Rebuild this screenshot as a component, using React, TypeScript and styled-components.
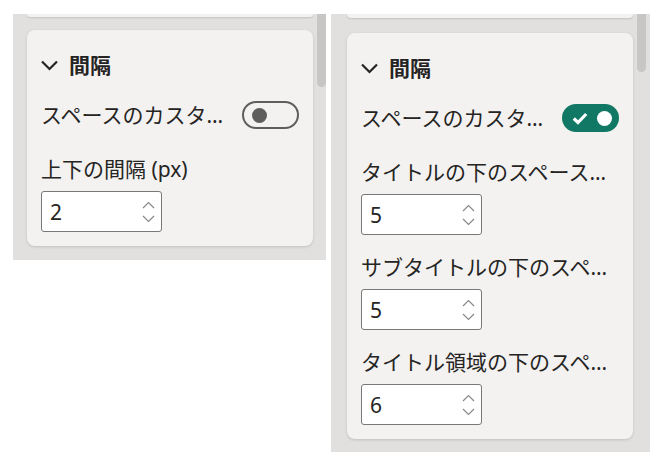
import styled, { createGlobalStyle } from "styled-components";

const GlobalStyle = createGlobalStyle`
  html, body {
    margin: 0;
    padding: 0;
    background: #ffffff;
  }
  body {
    font-family: "Noto Sans", "Noto Sans CJK JP", sans-serif;
    color: #252423;
  }
`;

const Page = styled.div`
  display: flex;
  align-items: flex-start;
  gap: 5px;
  padding: 14px 0 0 13px;
`;

const Panel = styled.div<{ $padLeft: number; $padBottom: number; $tail: number }>`
  display: flex;
  background: #e1e0df;
  padding-right: ${(p) => p.$tail}px;
  & > div:first-child {
    padding-left: ${(p) => p.$padLeft}px;
    padding-bottom: ${(p) => p.$padBottom}px;
  }
`;

const Column = styled.div`
  display: flex;
  flex-direction: column;
  padding-right: 4px;
`;

const Scrollbar = styled.div`
  width: 9px;
  display: flex;
  flex-direction: column;
`;

const Thumb = styled.div<{ $height: number }>`
  height: ${(p) => p.$height}px;
  background: #c8c6c4;
  border-radius: 0 0 5px 5px;
`;

const CardStub = styled.div<{ $height: number; $gap: number }>`
  height: ${(p) => p.$height}px;
  margin-bottom: ${(p) => p.$gap}px;
  background: #f3f2f1;
  border-radius: 0 0 8px 8px;
  box-shadow: 0 1px 2px rgba(0, 0, 0, 0.14);
`;

const Card = styled.div`
  width: 286px;
  box-sizing: border-box;
  background: #f3f2f1;
  border-radius: 8px;
  box-shadow: 0 1px 3px rgba(0, 0, 0, 0.14);
  padding: 20px 14px 14px;
  display: flex;
  flex-direction: column;
`;

const Heading = styled.div`
  display: flex;
  align-items: center;
  gap: 11px;
  height: 30px;
  margin-bottom: 20px;
  font-size: 21px;
  font-weight: 700;
  line-height: 30px;
`;

const ToggleRow = styled.div`
  display: flex;
  align-items: center;
  gap: 16px;
  height: 30px;
  margin-bottom: 25px;
`;

const Label = styled.div`
  flex: 1;
  min-width: 0;
  font-size: 21px;
  line-height: 28px;
  white-space: nowrap;
  overflow: hidden;
  text-overflow: ellipsis;
`;

const Fields = styled.div`
  display: flex;
  flex-direction: column;
  gap: 18px;
`;

const Field = styled.div`
  display: flex;
  flex-direction: column;
  gap: 8px;
`;

const NumberBox = styled.div`
  width: 121px;
  height: 41px;
  box-sizing: border-box;
  border: 1px solid #7a7876;
  border-radius: 3px;
  background: #ffffff;
  display: flex;
  align-items: center;
  padding: 0 6px 0 8px;
  font-size: 21px;
`;

const Value = styled.span`
  flex: 1;
`;

const Spinner = styled.div`
  display: flex;
  flex-direction: column;
  gap: 6px;
`;

const Toggle = styled.div<{ $on: boolean }>`
  flex: none;
  width: 57px;
  height: 28px;
  box-sizing: border-box;
  border-radius: 14px;
  border: 2px solid ${(p) => (p.$on ? "#117865" : "#605e5c")};
  background: ${(p) => (p.$on ? "#117865" : "transparent")};
  display: flex;
  align-items: center;
  justify-content: ${(p) => (p.$on ? "space-between" : "flex-start")};
  padding: 0 5px 0 8px;
`;

const Knob = styled.div<{ $on: boolean }>`
  width: 15px;
  height: 15px;
  border-radius: 50%;
  background: ${(p) => (p.$on ? "#ffffff" : "#605e5c")};
`;

const Chevron = () => (
  <svg width="17" height="11" viewBox="0 0 17 11">
    <path d="M1 1.5 L8.5 9 L16 1.5" fill="none" stroke="#252423" strokeWidth="2.2" />
  </svg>
);

const Arrows = () => (
  <Spinner>
    <svg width="13" height="8" viewBox="0 0 13 8">
      <path d="M1 7 L6.5 1.5 L12 7" fill="none" stroke="#8a8886" strokeWidth="1.2" />
    </svg>
    <svg width="13" height="8" viewBox="0 0 13 8">
      <path d="M1 1 L6.5 6.5 L12 1" fill="none" stroke="#8a8886" strokeWidth="1.2" />
    </svg>
  </Spinner>
);

const Check = () => (
  <svg width="16" height="13" viewBox="0 0 16 13">
    <path d="M1.8 6.5 L6 10.5 L14.2 2" fill="none" stroke="#ffffff" strokeWidth="3.2" />
  </svg>
);

type FieldData = { label: string; value: string };

type SpacingProps = {
  on: boolean;
  fields: FieldData[];
};

const SpacingCard = ({ on, fields }: SpacingProps) => (
  <Card>
    <Heading>
      <Chevron />
      <span>間隔</span>
    </Heading>
    <ToggleRow>
      <Label>スペースのカスタマイズ</Label>
      <Toggle $on={on}>
        {on && <Check />}
        <Knob $on={on} />
      </Toggle>
    </ToggleRow>
    <Fields>
      {fields.map((f) => (
        <Field key={f.label}>
          <Label>{f.label}</Label>
          <NumberBox>
            <Value>{f.value}</Value>
            <Arrows />
          </NumberBox>
        </Field>
      ))}
    </Fields>
  </Card>
);

export default function App() {
  return (
    <>
      <GlobalStyle />
      <Page>
        <Panel $padLeft={14} $padBottom={14} $tail={0}>
          <Column>
            <CardStub $height={3} $gap={13} />
            <SpacingCard on={false} fields={[{ label: "上下の間隔 (px)", value: "2" }]} />
          </Column>
          <Scrollbar>
            <Thumb $height={73} />
          </Scrollbar>
        </Panel>
        <Panel $padLeft={16} $padBottom={13} $tail={4}>
          <Column>
            <CardStub $height={4} $gap={15} />
            <SpacingCard
              on
              fields={[
                { label: "タイトルの下のスペース（px）", value: "5" },
                { label: "サブタイトルの下のスペース（px）", value: "5" },
                { label: "タイトル領域の下のスペース（px）", value: "6" },
              ]}
            />
          </Column>
          <Scrollbar>
            <Thumb $height={58} />
          </Scrollbar>
        </Panel>
      </Page>
    </>
  );
}
